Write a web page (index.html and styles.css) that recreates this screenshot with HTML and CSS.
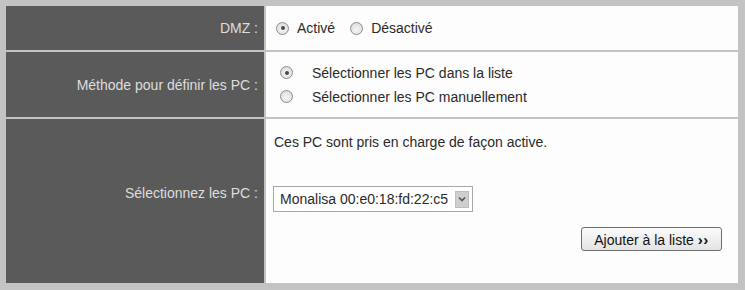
FILE: index.html
```html
<!DOCTYPE html>
<html lang="fr">
<head>
    <meta charset="UTF-8">
    <title>DMZ</title>
    <link rel="stylesheet" href="styles.css">
</head>
<body>
    <div class="panel">
        <div class="label">DMZ :</div>
        <div class="field dmz">
            <label class="opt"><input type="radio" name="dmz" checked> Activé</label>
            <label class="opt"><input type="radio" name="dmz"> Désactivé</label>
        </div>

        <div class="label">Méthode pour définir les PC :</div>
        <div class="field method">
            <label class="opt"><input type="radio" name="method" checked> Sélectionner les PC dans la liste</label>
            <label class="opt"><input type="radio" name="method"> Sélectionner les PC manuellement</label>
        </div>

        <div class="label label-pc">Sélectionnez les PC :</div>
        <div class="field pcs">
            <p class="note">Ces PC sont pris en charge de façon active.</p>
            <div class="picker">
                <select id="pcList">
                    <option>Monalisa 00:e0:18:fd:22:c5</option>
                </select>
                <span class="picker-arrow">
                    <svg width="8" height="6" viewBox="0 0 8 6"><path d="M1 1.5 L4 4.5 L7 1.5" fill="none" stroke="#555" stroke-width="1.6"/></svg>
                </span>
            </div>
            <div class="actions">
                <button class="btn-add">Ajouter à la liste <b>&rsaquo;&rsaquo;</b></button>
            </div>
        </div>
    </div>
</body>
</html>
```

FILE: styles.css
```css
body {
    margin: 0;
    background: #c3c3c3;
    font-family: "Liberation Sans", Arial, sans-serif;
    font-size: 14px;
}
.panel {
    display: grid;
    grid-template-columns: 258px 472px;
    grid-template-rows: 44px 65px 164px;
    gap: 2px;
    padding: 6px 7px 7px 6px;
    background: #c3c3c3;
}
.label {
    background: #5a5a5a;
    color: #dedede;
    display: flex;
    align-items: center;
    justify-content: flex-end;
    padding-right: 6px;
}
.label-pc {
    padding-bottom: 16px;
}
.field {
    background: #fdfdfd;
    color: #2a2a2a;
}
.opt {
    display: flex;
    align-items: center;
}
input[type="radio"] {
    appearance: none;
    -webkit-appearance: none;
    width: 13px;
    height: 13px;
    margin: 0;
    border: 1px solid #8c8c8c;
    border-radius: 50%;
    background: radial-gradient(circle at 50% 60%, #f6f6f6, #d6d6d6);
    box-sizing: border-box;
    position: relative;
}
input[type="radio"]:checked::after {
    content: "";
    position: absolute;
    left: 3.5px;
    top: 3.5px;
    width: 4px;
    height: 4px;
    border-radius: 50%;
    background: #4a4a4a;
}
.dmz {
    display: flex;
    align-items: center;
    padding-left: 10px;
    gap: 15px;
}
.dmz .opt input {
    margin-right: 8px;
}
.method {
    display: flex;
    flex-direction: column;
    justify-content: center;
    padding-left: 14px;
    gap: 8px;
}
.method .opt input {
    margin-right: 19px;
}
.pcs {
    padding: 14px 16px 0 7px;
}
.note {
    margin: 0 0 35px 1px;
    line-height: 18px;
}
.picker {
    display: flex;
    align-items: center;
    width: 200px;
    height: 26px;
    border: 1px solid #a8a8a8;
    box-sizing: border-box;
    background: #fff;
}
.picker select {
    appearance: none;
    -webkit-appearance: none;
    flex: 1;
    border: none;
    background: transparent;
    font: inherit;
    color: #2a2a2a;
    padding: 0 0 0 6px;
    outline: none;
}
.picker-arrow {
    width: 14px;
    height: 17px;
    margin-right: 3px;
    background: #cfcfcf;
    border: 1px solid #bdbdbd;
    box-sizing: border-box;
    display: flex;
    align-items: center;
    justify-content: center;
}
.actions {
    display: flex;
    justify-content: flex-end;
    margin-top: 15px;
}
.btn-add {
    height: 24px;
    width: 141px;
    padding: 0;
    font: inherit;
    color: #111;
    border: 1px solid #6e6e6e;
    border-radius: 3px;
    background: linear-gradient(#fbfbfb, #e3e3e3);
}
.btn-add b {
    font-size: 15px;
    letter-spacing: 0.5px;
}
```
